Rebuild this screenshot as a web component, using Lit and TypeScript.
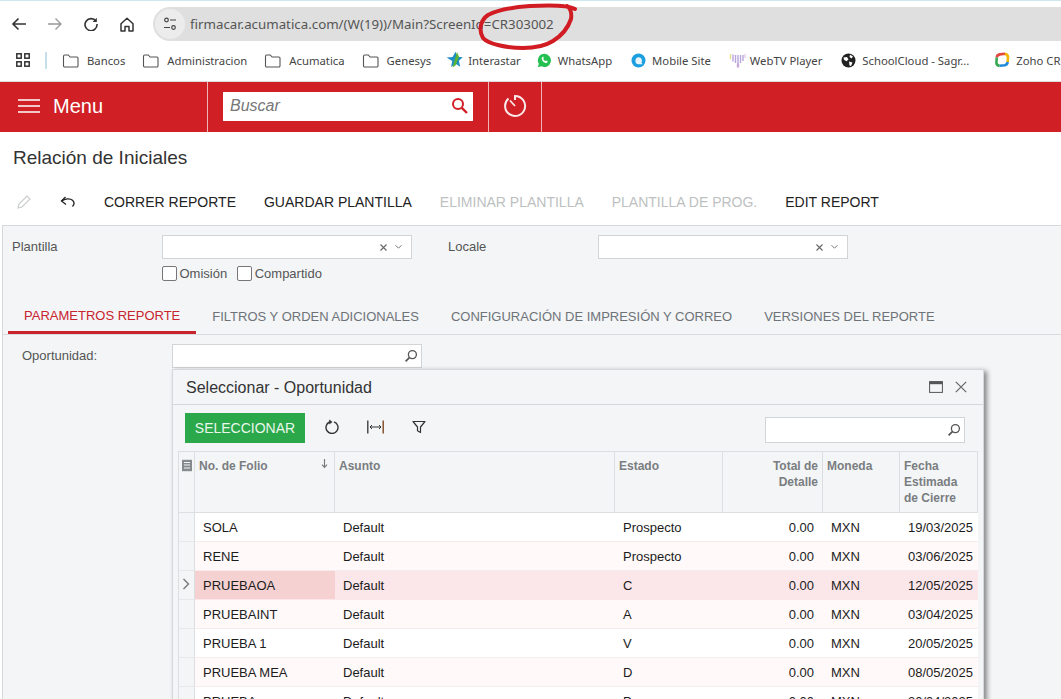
import { LitElement, html, css, svg } from "lit";
import { customElement } from "lit/decorators.js";

const ic = (w: number, h: number, body: unknown, cls = "") =>
  html`<svg class="ic ${cls}" width=${w} height=${h} viewBox="0 0 ${w} ${h}" fill="none">${body}</svg>`;

const folder = ic(17, 15, svg`<path d="M1.500 3.200a1.200 1.200 0 0 1 1.200-1.200h3.600l1.800 2h6.700a1.200 1.200 0 0 1 1.200 1.200v7.600a1.200 1.200 0 0 1-1.200 1.200H2.700a1.200 1.200 0 0 1-1.200-1.200z" stroke="#555" stroke-width="1.100"/>`);
const lens = (c = "#555", sw = 1.3) =>
  ic(14, 14, svg`<circle cx="8.400" cy="5.600" r="4" stroke=${c} stroke-width=${sw}/><path d="M5.400 8.600 1.600 12.400" stroke=${c} stroke-width=${sw + 0.4}/>`);
const clearX = ic(9, 9, svg`<path d="M1.500 1.500l6 6M7.500 1.500l-6 6" stroke="#666" stroke-width="1.100"/>`);
const chevron = ic(9, 6, svg`<path d="M1.500 1.200l3 3 3-3" stroke="#777" stroke-width="1"/>`);

const bookmarks = [
  { t: "Bancos", g: 8, m: 17, i: folder },
  { t: "Administracion", g: 8, m: 17, i: folder },
  { t: "Acumatica", g: 8, m: 17, i: folder },
  { t: "Genesys", g: 8, m: 15, i: folder },
  { t: "Interastar", g: 5, m: 16, i: ic(17, 18, svg`<path d="M9.500 .8l2 5 5.300.4-3.900 3.600 1.300 6-4.700-3-4.400 3.200 1.100-5.900L.6 6.400l6-.4z" fill="#1f8fc4"/><path d="M11 1 6.500 16.500l3-2L13 5.800z" fill="#5cb531"/>`) },
  { t: "WhatsApp", g: 6, m: 19, i: ic(15, 15, svg`<path d="M7.500.8a6.600 6.600 0 0 0-5.700 10L.9 14.200l3.500-.9A6.600 6.600 0 1 0 7.500.8z" fill="#25c052"/><path d="M5.200 4.200c-1 .9-.6 2.600.9 4.200 1.500 1.500 3.200 2 4.200 1l.4-1.100-1.700-.9-.8.7c-.9-.4-1.600-1.200-2-2l.7-.8-.8-1.700z" fill="#fff"/>`) },
  { t: "Mobile Site", g: 6, m: 18, i: ic(15, 15, svg`<circle cx="7.500" cy="7.500" r="7" fill="#1c9fdf"/><path d="M7.900 4.200a3.500 3.500 0 1 0 0 7h3.600l-1-1.700a3.500 3.500 0 0 0-2.600-5.300z" fill="#eaf6fc"/>`) },
  { t: "WebTV Player", g: 4, m: 19, i: ic(17, 16, svg`<path d="M1.500 2v5" stroke="#e7dd8a" stroke-width="1.400"/><path d="M4 2.500v7M6.500 3v8M9 3v9.500M11.500 3v8M14 3v6" stroke="#b9a6dc" stroke-width="1.400"/><path d="M16 2v4" stroke="#e2c9e6" stroke-width="1.300"/><path d="M9 11.500v4" stroke="#c9a7d8" stroke-width="2.400"/>`) },
  { t: "SchoolCloud - Sagr...", g: 6, m: 25, i: ic(15, 15, svg`<circle cx="7.500" cy="7.500" r="7" fill="#222"/><path d="M2.500 4.500l3.500-.5 1.500 2.500-2 1.800-2.500-1.500zM9 1.800l3 1.700-1.500 2L8.500 4zM8 8.500l3.500 1-1.500 3.500-1.500-.5z" fill="#fff"/>`) },
  { t: "Zoho CRM", g: 6, m: 0, i: ic(16, 16, svg`<path d="M2.700 5.500c.3-1.800 1.300-2.800 3.100-3.100L11 1.800" stroke="#e2483d" stroke-width="2.600"/><path d="M11 1.900c1.700.3 2.800 1.300 3 3.100l-.3 5" stroke="#f5b400" stroke-width="2.600"/><path d="M13.700 10c-.3 1.800-1.300 2.900-3.100 3.200l-5 .6" stroke="#1e88d9" stroke-width="2.600"/><path d="M5.600 13.900c-1.800-.2-3-1.300-3.200-3.100L2.700 5.500" stroke="#36a853" stroke-width="2.600"/>`) },
];

type Row = [string, string, string, string];
const rows: Row[] = [
  ["SOLA", "Default", "Prospecto", "19/03/2025"],
  ["RENE", "Default", "Prospecto", "03/06/2025"],
  ["PRUEBAOA", "Default", "C", "12/05/2025"],
  ["PRUEBAINT", "Default", "A", "03/04/2025"],
  ["PRUEBA 1", "Default", "V", "20/05/2025"],
  ["PRUEBA MEA", "Default", "D", "08/05/2025"],
  ["PRUEBA", "Default", "P", "30/04/2025"],
];

@customElement("app-root")
export class AppRoot extends LitElement {
  static styles = css`
    :host { display: block; width: 1061px; height: 699px; overflow: hidden; background: #fff; font-family: "Liberation Sans", Arial, sans-serif; position: relative; }
    .ic { display: block; flex: none; }

    .chrome { height: 41px; box-sizing: border-box; padding-top: 7px; border-top: 1px solid #cfe8ee; display: flex; overflow: hidden; }
    .nav { width: 153px; height: 34px; margin-top: -1px; display: grid; grid-template-columns: repeat(4, 36px); padding-left: 1px; box-sizing: border-box; align-items: center; justify-items: center; }
    .pill { flex: 1; height: 34px; margin-top: -1px; background: #dfdfdf; border-radius: 17px 0 0 17px; display: flex; align-items: center; padding-left: 2px; font: 13.3px "Noto Sans", "Open Sans", sans-serif; color: #555; white-space: nowrap; }
    .tune { width: 30px; height: 30px; border-radius: 50%; background: #ececec; display: grid; place-items: center; margin-right: 5px; }

    .bookmarks { height: 38px; padding: 0 0 2px 16px; display: flex; align-items: center; white-space: nowrap; overflow: hidden; font: 11.3px "Noto Sans", "Open Sans", sans-serif; color: #444; border-bottom: 1px solid #ddd; }
    .sep { width: 2px; height: 17px; background: #c5e0ea; margin: 0 15px 0 15px; flex: none; }
    .bm { display: flex; align-items: center; flex: none; }

    .appbar { height: 50px; background: #d11f26; display: flex; color: #fff; }
    .menu { width: 207px; display: flex; align-items: center; gap: 13px; padding: 0 0 2px 18px; box-sizing: border-box; font-size: 20px; }
    .search { width: 281px; border-left: 1px solid #eeb4b6; box-sizing: border-box; padding: 10px 15px 11px 15px; }
    .search div { height: 29px; background: #fff; display: flex; align-items: center; justify-content: space-between; padding: 0 4px 2px 7px; box-sizing: border-box; color: #777; font-style: italic; font-size: 16px; }
    .timer { width: 54px; border: solid #eeb4b6; border-width: 0 1px; display: grid; place-items: center; box-sizing: border-box; padding-bottom: 2px; }

    .title { height: 53px; box-sizing: border-box; padding: 15px 0 0 13px; font-size: 19px; line-height: 21px; color: #333; }
    .toolbar { height: 40px; box-sizing: border-box; display: flex; align-items: center; font-size: 14px; color: #222; padding: 0 0 6px 17px; gap: 28px; }
    .toolbar .off { color: #bdbfc1; }
    .tb-icons { display: flex; align-items: center; gap: 29px; }

    .body { background: #f3f5f7; border-top: 1px solid #d5d8dc; border-left: 1px solid #d5d8dc; margin-left: 2px; height: 474px; box-sizing: border-box; position: relative; font-size: 13px; color: #555; }
    .form { display: grid; grid-template-columns: 150px 250px 36px 150px 250px; padding: 9px 0 0 9px; }
    .form label { line-height: 24px; }
    .sel { height: 24px; border: 1px solid #d2d5d8; background: #fff; box-sizing: border-box; display: flex; align-items: center; justify-content: flex-end; gap: 6px; padding-right: 8px; }
    .checks { grid-column: 2 / 3; display: flex; gap: 10px; padding-top: 6px; height: 17px; align-items: center; }
    .check { display: flex; align-items: center; gap: 2.5px; }
    .box { width: 13px; height: 13px; border: 1px solid #777; border-radius: 2px; background: #fff; }

    .tabs { display: flex; margin-top: 18px; height: 35px; box-sizing: border-box; border-bottom: 1px solid #d9dcdf; margin-left: -1px; padding-left: 6px; font-size: 13px; color: #6f7377; }
    .tab { padding: 0 16px; line-height: 33px; white-space: nowrap; height: 34px; box-sizing: border-box; }
    .tab.on { color: #c9232d; border-bottom: 3px solid #c9232d; line-height: 32px; }

    .op { display: flex; align-items: center; padding: 9px 0 0 19px; height: 24px; }
    .op span { width: 150px; margin-top: -2px; }
    .inp { width: 250px; height: 24px; border: 1px solid #d2d5d8; background: #fff; box-sizing: border-box; display: flex; align-items: center; justify-content: flex-end; padding-right: 3px; }

    .dialog { position: absolute; left: 169px; top: 143px; width: 812px; height: 340px; background: #f3f5f7; border: 1px solid #d6d8db; box-sizing: border-box; box-shadow: 3px 2px 5px rgba(0,0,0,.45); }
    .d-head { height: 35px; border-bottom: 1px solid #d6d8db; display: flex; align-items: center; justify-content: space-between; padding: 1px 16px 0 13px; box-sizing: border-box; font-size: 16px; color: #333; }
    .d-win { display: flex; align-items: center; gap: 12px; margin-top: -1px; }
    .d-tools { display: flex; align-items: center; height: 30px; padding: 8px 18px 0 12px; }
    .btn { width: 120px; height: 30px; background: #2ba84a; color: #e9f7ec; font-size: 14px; display: grid; place-items: center; }
    .d-ic { display: flex; align-items: center; margin-left: 20px; gap: 28px; margin-top: -3px; }
    .d-inp { margin-left: auto; width: 200px; height: 26px; border: 1px solid #d2d5d8; background: #fff; box-sizing: border-box; display: flex; align-items: center; justify-content: flex-end; padding-right: 3px; margin-top: 4px; }

    .grid { margin: 8px 5px 0 5px; border: 1px solid #dcdfe2; border-bottom: 0; display: grid; grid-template-columns: 16px 140px 280px 108px 100px 77px 78px; }
    .h { height: 61px; box-sizing: border-box; padding: 6px 4px; border-right: 1px solid #dcdfe2; border-bottom: 1px solid #dcdfe2; font-weight: bold; font-size: 12px; line-height: 16px; color: #7a7d80; position: relative; }
    .h:last-child, .c:last-child { border-right: 0; }
    .h.r { text-align: right; }
    .sort { position: absolute; right: 6px; top: 7px; }
    .hs { padding: 7px 0 0 2px; }
    .c { height: 29px; box-sizing: border-box; padding: 0 8px; line-height: 29px; border-bottom: 1px solid #f5eded; font-size: 13px; color: #1c1c1c; background: #fff; white-space: nowrap; overflow: hidden; }
    .c.alt { background: #fff9f9; }
    .c.sel-row { background: #fbe6e9; border-bottom-color: #fbe6e9; }
    .c.cur { background: #f5d1d1; }
    .c.gut { background: #f3f5f7; border-right: 1px solid #dcdfe2; border-bottom-color: #e6e8ea; padding: 7px 0 0 3px; }
    .c.num { text-align: right; padding-right: 9px; }
    .c.date { text-align: right; padding: 0 5px 0 0; }

    .ink { position: absolute; left: 470px; top: 0; pointer-events: none; }
  `;

  render() {
    return html`
      <div class="chrome">
        <div class="nav">
          ${ic(16, 14, svg`<path d="M15 7H2M7.500 1.500 2 7l5.500 5.500" stroke="#333" stroke-width="1.600"/>`)}
          ${ic(16, 14, svg`<path d="M1 7h13M8.500 1.500 14 7l-5.500 5.500" stroke="#999" stroke-width="1.300"/>`)}
          ${ic(14, 14, svg`<path d="M12 4.300A6 6 0 1 0 13 7" stroke="#333" stroke-width="1.600"/><path d="M12.800 .8v4.200H8.600z" fill="#333"/>`)}
          ${ic(14, 15, svg`<path d="M1 6.700 7 1.200l6 5.500V14H9V9.500H5V14H1z" stroke="#333" stroke-width="1.500" stroke-linejoin="round"/>`)}
        </div>
        <div class="pill">
          <div class="tune">${ic(14, 14, svg`<circle cx="3.500" cy="3" r="1.800" stroke="#444" stroke-width="1.200"/><path d="M7 3h6M1 10.500h6" stroke="#444" stroke-width="1.200"/><circle cx="10.500" cy="10.500" r="1.800" stroke="#444" stroke-width="1.200"/>`)}</div>
          <span>firmacar.acumatica.com/(W(19))/Main?ScreenId=CR303002</span>
        </div>
      </div>

      <div class="bookmarks">
        ${ic(14, 14, svg`<g stroke="#333" stroke-width="1.500"><rect x=".8" y=".8" width="4.400" height="4.400"/><rect x="8.800" y=".8" width="4.400" height="4.400"/><rect x=".8" y="8.800" width="4.400" height="4.400"/><rect x="8.800" y="8.800" width="4.400" height="4.400"/></g>`)}
        <div class="sep"></div>
        ${bookmarks.map((b) => html`<div class="bm" style="gap:${b.g}px;margin-right:${b.m}px">${b.i}<span>${b.t}</span></div>`)}
      </div>

      <div class="appbar">
        <div class="menu">
          ${ic(22, 16, svg`<path d="M0 2h22M0 8h22M0 14h22" stroke="#fff" stroke-width="1.600"/>`)}
          <span>Menu</span>
        </div>
        <div class="search"><div><span>Buscar</span>
          ${ic(18, 18, svg`<circle cx="7" cy="7" r="5" stroke="#d11f26" stroke-width="2"/><path d="M10.800 10.800 16 16" stroke="#d11f26" stroke-width="2.400"/>`)}
        </div></div>
        <div class="timer">
          ${ic(24, 24, svg`<path d="M5.500 4.500A10 10 0 1 0 12 2V6" stroke="#fbe9ea" stroke-width="2"/><path d="M7 6.500 12 12" stroke="#fbe9ea" stroke-width="1.800"/>`)}
        </div>
      </div>

      <div class="title">Relación de Iniciales</div>
      <div class="toolbar">
        <div class="tb-icons">
          ${ic(14, 14, svg`<path d="M1 13 2 9 10 1l3 3-8 8z" stroke="#c9cbcd" stroke-width="1.100"/>`)}
          ${ic(16, 12, svg`<path d="M5.500 1 1.500 5 6 8.500" stroke="#222" stroke-width="1.300"/><path d="M1.500 5C5 2.500 10 2 12.500 4.200c2 1.900 1.700 4.500 0 6.300" stroke="#222" stroke-width="1.300"/>`)}
        </div>
        <span>CORRER REPORTE</span>
        <span>GUARDAR PLANTILLA</span>
        <span class="off">ELIMINAR PLANTILLA</span>
        <span class="off">PLANTILLA DE PROG.</span>
        <span>EDIT REPORT</span>
      </div>

      <div class="body">
        <div class="form">
          <label>Plantilla</label>
          <div class="sel">${clearX}${chevron}</div>
          <div></div>
          <label>Locale</label>
          <div class="sel">${clearX}${chevron}</div>
          <div class="checks">
            <div class="check"><div class="box"></div>Omisión</div>
            <div class="check"><div class="box"></div>Compartido</div>
          </div>
        </div>

        <div class="tabs">
          <div class="tab on">PARAMETROS REPORTE</div>
          <div class="tab">FILTROS Y ORDEN ADICIONALES</div>
          <div class="tab">CONFIGURACIÓN DE IMPRESIÓN Y CORREO</div>
          <div class="tab">VERSIONES DEL REPORTE</div>
        </div>

        <div class="op"><span>Oportunidad:</span><div class="inp">${lens()}</div></div>

        <div class="dialog">
          <div class="d-head">
            <span>Seleccionar - Oportunidad</span>
            <div class="d-win">
              ${ic(14, 12, svg`<rect x=".6" y=".6" width="12.800" height="10.800" stroke="#555" stroke-width="1"/><path d="M.6 2h12.800" stroke="#555" stroke-width="2.400"/>`)}
              ${ic(12, 12, svg`<path d="M.8.8l10.400 10.400M11.200.8.8 11.200" stroke="#666" stroke-width="1.200"/>`)}
            </div>
          </div>
          <div class="d-tools">
            <div class="btn">SELECCIONAR</div>
            <div class="d-ic">
              ${ic(14, 15, svg`<path d="M9 2.800A6 6 0 1 1 4.500 3" stroke="#333" stroke-width="1.400"/><path d="M4.200 .5 7.500 3 4.200 5.500z" fill="#333"/>`)}
              ${ic(17, 14, svg`<path d="M.8 .5v13" stroke="#333" stroke-width="1.300"/><path d="M16.200 .5v13" stroke="#7a3a10" stroke-width="1.300"/><path d="M3 7h11M5 5 3 7l2 2M12 5l2 2-2 2" stroke="#333" stroke-width="1"/>`)}
              ${ic(14, 14, svg`<path d="M1 1.500h12L8.500 7v5.500l-3-1.700V7z" stroke="#333" stroke-width="1.200" stroke-linejoin="round"/>`)}
            </div>
            <div class="d-inp">${lens()}</div>
          </div>

          <div class="grid">
            <div class="h hs">${ic(12, 13, svg`<path d="M1 .8h10v11.400H1z" fill="#858a8e"/><path d="M3 3.500h6M3 6h6M3 9h6" stroke="#f3f5f7" stroke-width="1.200"/>`)}</div>
            <div class="h">No. de Folio
              <div class="sort">${ic(7, 10, svg`<path d="M3.500 0v8M1 5.700l2.500 2.700L6 5.700" stroke="#777" stroke-width="1.100"/>`)}</div>
            </div>
            <div class="h">Asunto</div>
            <div class="h">Estado</div>
            <div class="h r">Total de<br />Detalle</div>
            <div class="h">Moneda</div>
            <div class="h">Fecha<br />Estimada<br />de Cierre</div>
            ${rows.map((r, i) => {
              const tone = i === 2 ? "sel-row" : i % 2 ? "alt" : "";
              return html`
                <div class="c gut">${i === 2 ? ic(8, 12, svg`<path d="M1.500 1 6.500 6l-5 5" stroke="#777" stroke-width="1.400"/>`) : ""}</div>
                <div class="c ${tone} ${i === 2 ? "cur" : ""}">${r[0]}</div>
                <div class="c ${tone}">${r[1]}</div>
                <div class="c ${tone}">${r[2]}</div>
                <div class="c num ${tone}">0.00</div>
                <div class="c ${tone}">MXN</div>
                <div class="c date ${tone}">${r[3]}</div>`;
            })}
          </div>
        </div>
      </div>

      <svg class="ink" width="120" height="55" viewBox="0 0 120 55" fill="none">
        <path d="M105 9C98 5 78 5 60 6 45 7 28 10 18 15 11 20 8 29 13 38c5 6 24 10 40 10 12 0 22-2 30-7 8-5 15-13 18-22 1-6-1-11-4-13" stroke="#d01c22" stroke-width="4" stroke-linecap="round"/>
      </svg>
    `;
  }
}
